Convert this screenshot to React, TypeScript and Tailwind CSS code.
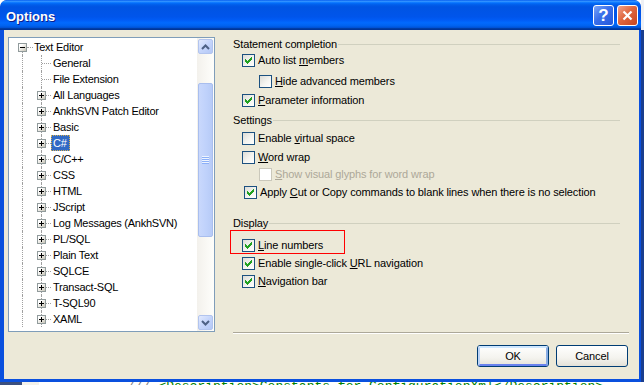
import React from 'react';

type CheckProps = { checked?: boolean; disabled?: boolean };

function Check({ checked = false, disabled = false }: CheckProps) {
  return (
    <span
      className={`flex h-[13px] w-[13px] shrink-0 items-center justify-center border ${
        disabled
          ? 'border-[#CAC8BB] bg-white'
          : 'border-[#1C5180] bg-[linear-gradient(135deg,#DCDCD7_0%,#F4F4F0_55%,#FFFFFF_100%)]'
      }`}
    >
      {checked && (
        <svg width="7" height="7" viewBox="0 0 7 7" shapeRendering="crispEdges" fill="#21A121">
          <rect x="6" y="0" width="1" height="1" />
          <rect x="5" y="1" width="2" height="1" />
          <rect x="0" y="2" width="1" height="1" />
          <rect x="4" y="2" width="3" height="1" />
          <rect x="0" y="3" width="2" height="1" />
          <rect x="3" y="3" width="3" height="1" />
          <rect x="0" y="4" width="5" height="1" />
          <rect x="1" y="5" width="3" height="1" />
          <rect x="2" y="6" width="1" height="1" />
        </svg>
      )}
    </span>
  );
}

function Expander({ plus }: { plus: boolean }) {
  return (
    <span className="relative block h-[9px] w-[9px] border border-[#919B9C] bg-[linear-gradient(135deg,#FFFFFF_25%,#C6C3B5_100%)]">
      <span className="absolute left-[1px] top-[3px] h-[1px] w-[5px] bg-black" />
      {plus && <span className="absolute left-[3px] top-[1px] h-[5px] w-[1px] bg-black" />}
    </span>
  );
}

const children: { label: string; leaf?: boolean; selected?: boolean }[] = [
  { label: 'General', leaf: true },
  { label: 'File Extension', leaf: true },
  { label: 'All Languages' },
  { label: 'AnkhSVN Patch Editor' },
  { label: 'Basic' },
  { label: 'C#', selected: true },
  { label: 'C/C++' },
  { label: 'CSS' },
  { label: 'HTML' },
  { label: 'JScript' },
  { label: 'Log Messages (AnkhSVN)' },
  { label: 'PL/SQL' },
  { label: 'Plain Text' },
  { label: 'SQLCE' },
  { label: 'Transact-SQL' },
  { label: 'T-SQL90' },
  { label: 'XAML' },
];

function TreeView() {
  return (
    <div className="flex h-[295px] w-[207px] border border-[#7F9DB9] bg-white">
      <div className="flex-1 overflow-hidden pt-[1px]">
        <div className="relative flex h-[16px] items-center">
          <span className="absolute left-[9px] top-[4px]">
            <Expander plus={false} />
          </span>
          <span className="absolute left-[18px] top-[8px] h-0 w-[6px] border-t border-dotted border-[#A0A0A0]" />
          <span className="absolute left-[13px] top-[13px] h-[3px] w-0 border-l border-dotted border-[#A0A0A0]" />
          <span className="ml-[23px] whitespace-nowrap pl-[2px] pr-[3px]">Text Editor</span>
        </div>
        {children.map((c) => (
          <div key={c.label} className="relative flex h-[16px] items-center">
            <span className="absolute left-[13px] top-0 h-[16px] w-0 border-l border-dotted border-[#A0A0A0]" />
            <span className="absolute left-[32px] top-0 h-[16px] w-0 border-l border-dotted border-[#A0A0A0]" />
            {c.leaf ? (
              <span className="absolute left-[33px] top-[8px] h-0 w-[9px] border-t border-dotted border-[#A0A0A0]" />
            ) : (
              <>
                <span className="absolute left-[37px] top-[8px] h-0 w-[5px] border-t border-dotted border-[#A0A0A0]" />
                <span className="absolute left-[28px] top-[4px]">
                  <Expander plus />
                </span>
              </>
            )}
            <span
              className={`ml-[42px] flex h-[16px] items-center whitespace-nowrap pl-[2px] pr-[3px] ${
                c.selected
                  ? 'bg-[#316AC5] text-white outline-1 -outline-offset-1 outline-dotted outline-[#D8B050]'
                  : ''
              }`}
            >
              {c.label}
            </span>
          </div>
        ))}
      </div>
      <ScrollBar />
    </div>
  );
}

function ScrollButton({ up }: { up: boolean }) {
  return (
    <div className="h-[17px] w-[17px] p-[1px]">
      <div className="flex h-[15px] w-[15px] items-center justify-center rounded-[2px] border border-[#B2C4EE] bg-[linear-gradient(135deg,#E2EAFE_0%,#C5D5FB_50%,#B4C8F6_100%)]">
        <svg width="9" height="6" viewBox="0 0 9 6">
          {up ? (
            <path d="M1 5 L4.5 1.5 L8 5" fill="none" stroke="#4D6185" strokeWidth="2" />
          ) : (
            <path d="M1 1 L4.5 4.5 L8 1" fill="none" stroke="#4D6185" strokeWidth="2" />
          )}
        </svg>
      </div>
    </div>
  );
}

function ScrollBar() {
  return (
    <div className="flex w-[17px] flex-col bg-[linear-gradient(90deg,#F3F1EC_0%,#FEFEFB_100%)]">
      <ScrollButton up />
      <div className="mt-[28px] px-[1px]">
        <div className="flex h-[154px] flex-col items-center justify-center rounded-[2px] border border-[#A9BEEE] bg-[linear-gradient(90deg,#C9D8FC_0%,#C0D2FB_50%,#B7CBF7_100%)]">
          {[0, 1, 2, 3].map((i) => (
            <div key={i} className="flex flex-col">
              <span className="h-[1px] w-[7px] bg-[#EEF4FE]" />
              <span className="h-[1px] w-[7px] bg-[#8CB0F8]" />
            </div>
          ))}
        </div>
      </div>
      <div className="flex-1" />
      <ScrollButton up={false} />
    </div>
  );
}

function GroupTitle({ children, mt }: { children: React.ReactNode; mt: string }) {
  return (
    <div className={`flex h-[13px] items-center mr-[9px] ${mt}`}>
      <span className="whitespace-nowrap">{children}</span>
      <span className="ml-[1px] h-0 flex-1 border-t border-[#D0D0BF]" />
    </div>
  );
}

function CheckRow({
  children,
  checked,
  disabled,
  indent,
  mt,
  extra,
}: {
  children: React.ReactNode;
  checked?: boolean;
  disabled?: boolean;
  indent: string;
  mt: string;
  extra?: React.ReactNode;
}) {
  return (
    <div className={`relative flex h-[13px] items-center gap-[3px] ${indent} ${mt}`}>
      <Check checked={checked} disabled={disabled} />
      <span className={`whitespace-nowrap ${disabled ? 'text-[#ACA899]' : ''}`}>{children}</span>
      {extra}
    </div>
  );
}

function XPButton({ label, isDefault }: { label: string; isDefault?: boolean }) {
  return (
    <div className="h-[22px] w-[72px] rounded-[3px] border border-[#003C74] bg-[linear-gradient(180deg,#FFFFFF_0%,#F4F3EE_60%,#E3E1D8_100%)]">
      <div
        className={`flex h-full w-full items-center justify-center rounded-[2px] ${
          isDefault ? 'border-2 border-t-[#CEE7FF] border-l-[#BCD4F6] border-r-[#89ADE4] border-b-[#6982EE]' : ''
        }`}
      >
        {label}
      </div>
    </div>
  );
}

function TitleBar() {
  return (
    <div className="flex h-[30px] shrink-0 items-center justify-between rounded-t-[7px] bg-[linear-gradient(180deg,#0058EE_0%,#3593FF_4%,#288EFF_6%,#127DFF_8%,#036FFC_10%,#0262EE_14%,#0057E5_20%,#0054E3_24%,#0055EB_56%,#005BF5_66%,#026AFE_76%,#0062EF_86%,#0052D6_92%,#0040AB_94%,#003092_100%)] pl-[6px] pr-[3px]">
      <span className="mt-[2px] text-[13px] font-bold tracking-normal text-white [text-shadow:1px_1px_#0A1E8C]">
        Options
      </span>
      <div className="flex gap-[3px]">
        <div className="flex h-[21px] w-[21px] items-center justify-center rounded-[3px] border border-white bg-[linear-gradient(135deg,#7AA4F8_0%,#3A6FEA_45%,#2458DB_100%)] text-[17px] font-bold leading-none tracking-normal text-white">
          ?
        </div>
        <div className="flex h-[21px] w-[21px] items-center justify-center rounded-[3px] border border-white bg-[linear-gradient(135deg,#F0A28C_0%,#E0673F_45%,#C8451F_100%)]">
          <svg width="11" height="11" viewBox="0 0 11 11">
            <path d="M1.5 1.5 L9.5 9.5 M9.5 1.5 L1.5 9.5" stroke="#FFFFFF" strokeWidth="2.2" />
          </svg>
        </div>
      </div>
    </div>
  );
}

export default function App() {
  return (
    <div className="flex h-[385px] w-[644px] flex-col overflow-hidden bg-white font-['Liberation_Sans',Arial,sans-serif] text-[11px] leading-[13px] tracking-[-0.25px] text-black">
      <div className="flex h-[382px] shrink-0">
        <div className="flex h-[382px] w-[641px] flex-col overflow-hidden rounded-t-[7px] bg-[#0A50DE]">
          <TitleBar />
          <div className="flex flex-1 pb-[3px] pl-[4px] pr-[2px]">
            <div className="flex flex-1 bg-[#ECE9D8] pl-[4px] pr-[10px]">
              <div className="mt-[7px]">
                <TreeView />
              </div>
              <div className="ml-[18px] flex flex-1 flex-col tracking-[-0.12px]">
                <GroupTitle mt="mt-[8px]">Statement completion</GroupTitle>
                <CheckRow checked indent="ml-[9px]" mt="mt-[3px]">
                  Auto list <u>m</u>embers
                </CheckRow>
                <CheckRow indent="ml-[26px]" mt="mt-[8px]">
                  <u>H</u>ide advanced members
                </CheckRow>
                <CheckRow checked indent="ml-[9px]" mt="mt-[6px]">
                  <u>P</u>arameter information
                </CheckRow>
                <GroupTitle mt="mt-[7px]">Settings</GroupTitle>
                <CheckRow indent="ml-[9px]" mt="mt-[5px]">
                  Enable <u>v</u>irtual space
                </CheckRow>
                <CheckRow indent="ml-[9px]" mt="mt-[6px]">
                  <u>W</u>ord wrap
                </CheckRow>
                <CheckRow disabled indent="ml-[26px]" mt="mt-[4px]">
                  <u>S</u>how visual glyphs for word wrap
                </CheckRow>
                <CheckRow checked indent="ml-[11px]" mt="mt-[5px]">
                  Apply <u>C</u>ut or Copy commands to blank lines when there is no selection
                </CheckRow>
                <GroupTitle mt="mt-[18px]">Display</GroupTitle>
                <CheckRow
                  checked
                  indent="ml-[9px]"
                  mt="mt-[9px]"
                  extra={
                    <span className="pointer-events-none absolute left-[-12px] top-[-9px] h-[24px] w-[115px] border border-[#FF0000]" />
                  }
                >
                  <u>L</u>ine numbers
                </CheckRow>
                <CheckRow checked indent="ml-[9px]" mt="mt-[5px]">
                  Enable single-click <u>U</u>RL navigation
                </CheckRow>
                <CheckRow checked indent="ml-[9px]" mt="mt-[5px]">
                  <u>N</u>avigation bar
                </CheckRow>
                <div className="mt-[44px] h-[2px] border-t border-b border-t-[#ACA899] border-b-white" />
                <div className="mr-[1px] mt-[11px] flex justify-end gap-[7px]">
                  <XPButton label="OK" isDefault />
                  <XPButton label="Cancel" />
                </div>
              </div>
            </div>
          </div>
        </div>
        <div className="flex w-[3px] flex-col">
          <div className="h-[30px] bg-[#EEF0F4]" />
          <div className="flex-1 bg-[#1A3E8E]" />
        </div>
      </div>
      <div className="flex h-[3px] overflow-hidden">
        <div className="w-[22px] bg-[#3B4F7E]" />
        <div className="w-[17px] bg-[#F3F1EA]" />
        <div className="flex flex-1 whitespace-nowrap font-['Liberation_Mono',monospace] text-[13px] leading-[13px] tracking-normal">
          <span className="ml-[88px] mt-[-2px] text-[#808080]">///</span>
          <span className="ml-[8px] mt-[-2px] text-[#008000]">&lt;Description&gt;Constants for ConfigurationXml&lt;/Description&gt;</span>
        </div>
      </div>
    </div>
  );
}
